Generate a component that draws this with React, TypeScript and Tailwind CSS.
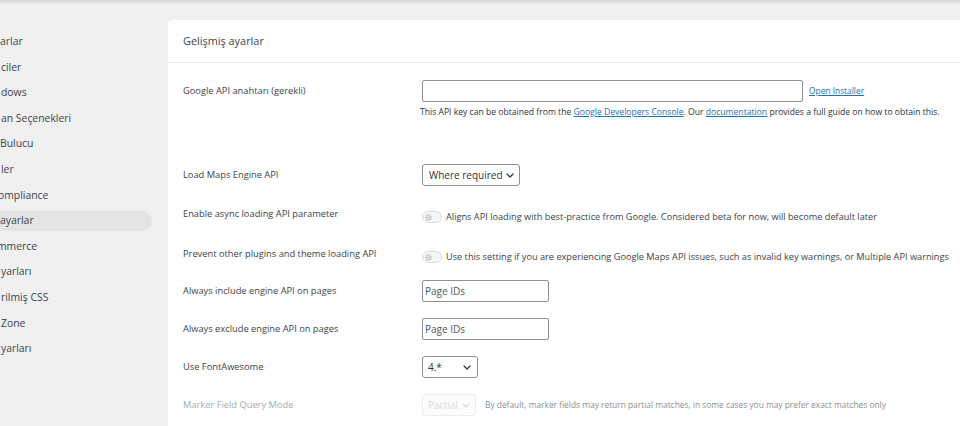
import React from "react";

const sideItems: { label: string; cls: string; active?: boolean }[] = [
  { label: "arlar", cls: "ml-[0px]" },
  { label: "ciler", cls: "ml-[1px]" },
  { label: "dows", cls: "ml-[1px]" },
  { label: "an Seçenekleri", cls: "ml-[1px]" },
  { label: "Bulucu", cls: "ml-[0px]" },
  { label: "ler", cls: "ml-[1px]" },
  { label: "ompliance", cls: "ml-[-2px]" },
  { label: "ayarlar", cls: "ml-[0px]", active: true },
  { label: "mmerce", cls: "ml-[-3px]" },
  { label: "yarları", cls: "ml-[1px]" },
  { label: "rilmiş CSS", cls: "ml-[1px]" },
  { label: "Zone", cls: "ml-[1px]" },
  { label: "yarları", cls: "ml-[1px]" },
];

function Chevron({ className = "" }: { className?: string }) {
  return (
    <svg width="8" height="5" viewBox="0 0 8 5" className={className} fill="none">
      <path d="M1 1l3 3 3-3" stroke="currentColor" strokeWidth="1.2" strokeLinecap="round" strokeLinejoin="round" />
    </svg>
  );
}

function Toggle() {
  return (
    <span className="flex items-center w-[20px] h-[12px] rounded-full border border-[#dcdcde] bg-[#f6f7f7] pl-[2px] shrink-0">
      <span className="w-[7px] h-[7px] rounded-full bg-[#d5d6d8]" />
    </span>
  );
}

export default function App() {
  return (
    <div
      className="w-[960px] h-[426px] overflow-hidden bg-[#f0f0f1] text-[#3c434a] flex flex-col"
      style={{ fontFamily: '"Open Sans", "Noto Sans", sans-serif' }}
    >
      <div className="h-[4px] shrink-0 bg-gradient-to-b from-[#d2d2d4] to-[#f0f0f1]" />
      <div className="flex flex-1 min-h-0">
        {/* Sidebar */}
        <div className="w-[168px] shrink-0 overflow-hidden">
          <div className="w-[152px] pt-[25px] flex flex-col">
            {sideItems.map((it, i) => (
              <div key={i} className="h-[25.6px] flex items-center">
                <div
                  className={
                    "w-full h-[20px] flex items-center rounded-r-full text-[10.4px] whitespace-nowrap overflow-hidden " +
                    (it.active ? "bg-[#e4e4e5]" : "")
                  }
                >
                  <span className={it.cls}>{it.label}</span>
                </div>
              </div>
            ))}
          </div>
        </div>

        {/* Card */}
        <div className="flex-1 mt-[16px] bg-white rounded-tl-[4px] flex flex-col min-w-0">
          <div className="h-[43px] shrink-0 border-b border-[#ececed] flex items-center pl-[15px] text-[10.9px] text-[#3c434a]">
            Gelişmiş ayarlar
          </div>
          <div className="flex flex-col pl-[15px] pt-[17px] text-[9.3px]">
            {/* Row A */}
            <div className="h-[84px] flex items-start">
              <div className="w-[239px] h-[22px] flex items-center">Google API anahtarı (gerekli)</div>
              <div className="flex flex-col">
                <div className="flex items-center">
                  <div className="w-[381px] h-[22px] border border-[#8c8f94] rounded-[2px] bg-white" />
                  <a className="ml-[6px] text-[8.4px] text-[#2271b1] underline">Open Installer</a>
                </div>
                <div className="mt-[4px] ml-[-2px] text-[8.6px] whitespace-nowrap text-[#2c3338]">
                  This API key can be obtained from the{" "}
                  <a className="text-[#2271b1] underline">Google Developers Console</a>. Our{" "}
                  <a className="text-[#2271b1] underline">documentation</a> provides a full guide on how to obtain this.
                </div>
              </div>
            </div>

            {/* Row B */}
            <div className="h-[40px] flex items-start">
              <div className="w-[239px] h-[22px] flex items-center">Load Maps Engine API</div>
              <div className="w-[98px] h-[22px] border border-[#8c8f94] rounded-[3px] flex items-center pl-[6px] text-[10px] text-[#2c3338]">
                Where required
                <Chevron className="ml-[3px] mt-[1px]" />
              </div>
            </div>

            {/* Row C */}
            <div className="h-[40px] flex items-start">
              <div className="w-[239px] h-[20px] flex items-center">Enable async loading API parameter</div>
              <div className="flex items-center h-[20px] mt-[3px] text-[9.2px] whitespace-nowrap">
                <Toggle />
                <span className="ml-[4px]">
                  Aligns API loading with best-practice from Google. Considered beta for now, will become default later
                </span>
              </div>
            </div>

            {/* Row D */}
            <div className="h-[36px] flex items-start">
              <div className="w-[239px] h-[20px] flex items-center">Prevent other plugins and theme loading API</div>
              <div className="flex items-center h-[20px] mt-[3px] text-[9.2px] whitespace-nowrap">
                <Toggle />
                <span className="ml-[4px]">
                  Use this setting if you are experiencing Google Maps API issues, such as invalid key warnings, or Multiple API warnings
                </span>
              </div>
            </div>

            {/* Row E */}
            <div className="h-[38px] flex items-start">
              <div className="w-[239px] h-[22px] flex items-center">Always include engine API on pages</div>
              <div className="w-[127px] h-[22px] border border-[#8c8f94] rounded-[2px] flex items-center pl-[2px] text-[10px] text-[#50575e]">
                Page IDs
              </div>
            </div>

            {/* Row F */}
            <div className="h-[38px] flex items-start">
              <div className="w-[239px] h-[22px] flex items-center">Always exclude engine API on pages</div>
              <div className="w-[127px] h-[22px] border border-[#8c8f94] rounded-[2px] flex items-center pl-[2px] text-[10px] text-[#50575e]">
                Page IDs
              </div>
            </div>

            {/* Row G */}
            <div className="h-[38px] flex items-start">
              <div className="w-[239px] h-[22px] flex items-center">Use FontAwesome</div>
              <div className="w-[56px] h-[22px] border border-[#8c8f94] rounded-[3px] flex items-center pl-[5px] pr-[6px] justify-between text-[10px] text-[#2c3338]">
                4.*
                <Chevron />
              </div>
            </div>

            {/* Row H */}
            <div className="h-[30px] flex items-start text-[#a7aaad]">
              <div className="w-[239px] h-[22px] flex items-center">Marker Field Query Mode</div>
              <div className="w-[54px] h-[22px] border border-[#ececec] rounded-[3px] flex items-center pl-[5px] text-[10px] text-[#dcdcde] bg-[#fcfcfc]">
                Partial
                <Chevron className="ml-[4px] mt-[1px]" />
              </div>
              <div className="h-[22px] flex items-center ml-[9px] text-[8.4px] text-[#8c8f94] whitespace-nowrap">
                By default, marker fields may return partial matches, in some cases you may prefer exact matches only
              </div>
            </div>
          </div>
        </div>
      </div>
    </div>
  );
}
